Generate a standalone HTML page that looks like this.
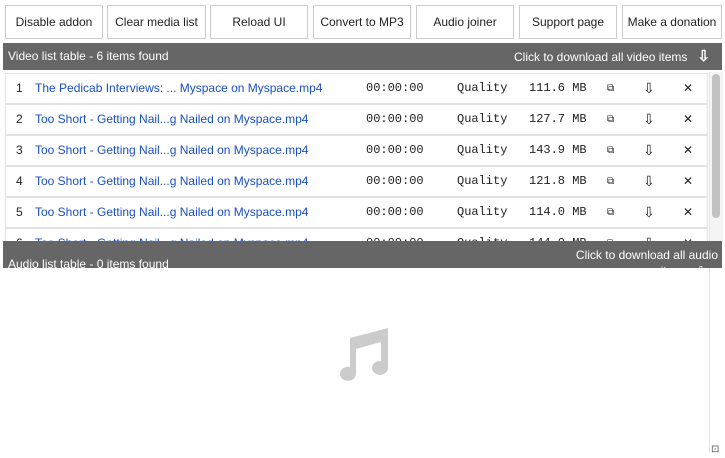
<!DOCTYPE html><html><head><style>
body{margin:0;width:725px;height:458px;background:#fff;font-family:"Liberation Sans",sans-serif;position:relative;overflow:hidden}
.b{position:absolute;top:5px;height:32px;border:1px solid #ccc;background:#fff;font-size:12px;line-height:32px;text-align:center;color:#222}
.bar{position:absolute;left:3px;width:719px;background:#666;color:#fff;font-size:12px}
.row{position:absolute;left:5px;width:701px;height:29px;border:1px solid #e2e2e2;font-size:12px;line-height:29px;color:#222}
.row span{position:absolute}
.n{left:10px}.t{left:29px;color:#1a4fc4;font-size:12px}.d{left:360px;font-family:"Liberation Mono",monospace}
.q{left:451px;font-family:"Liberation Mono",monospace}.s{left:523px;font-family:"Liberation Mono",monospace}
.i1{left:601px;font-size:10px}.i2{left:637px;font-size:14px}.i3{left:677px;font-size:12px}
</style></head><body>
<div class="b" style="left:5px;width:96px">Disable addon</div>
<div class="b" style="left:107px;width:97px">Clear media list</div>
<div class="b" style="left:210px;width:96px">Reload UI</div>
<div class="b" style="left:313px;width:96px">Convert to MP3</div>
<div class="b" style="left:416px;width:96px">Audio joiner</div>
<div class="b" style="left:519px;width:96px">Support page</div>
<div class="b" style="left:622px;width:98px">Make a donation</div>
<div class="bar" style="top:43px;height:27px;line-height:27px"><span style="margin-left:5px">Video list table - 6 items found</span><span style="position:absolute;right:12px">Click to download all video items &nbsp;&nbsp;<b style="font-size:15px">⇩</b></span></div>
<div style="position:absolute;left:709px;top:72px;width:13px;height:169px;background:#f4f4f4;border-left:1px solid #e5e5e5"></div>
<div style="position:absolute;left:712px;top:74px;width:8px;height:144px;background:#c2c2c2;border-radius:4px"></div>
<div class="row" style="top:73px"><span class="n">1</span><span class="t">The Pedicab Interviews: ... Myspace on Myspace.mp4</span><span class="d">00:00:00</span><span class="q">Quality</span><span class="s">111.6 MB</span><span class="i1">⧉</span><span class="i2">⇩</span><span class="i3">✕</span></div>
<div class="row" style="top:104px"><span class="n">2</span><span class="t">Too Short - Getting Nail...g Nailed on Myspace.mp4</span><span class="d">00:00:00</span><span class="q">Quality</span><span class="s">127.7 MB</span><span class="i1">⧉</span><span class="i2">⇩</span><span class="i3">✕</span></div>
<div class="row" style="top:135px"><span class="n">3</span><span class="t">Too Short - Getting Nail...g Nailed on Myspace.mp4</span><span class="d">00:00:00</span><span class="q">Quality</span><span class="s">143.9 MB</span><span class="i1">⧉</span><span class="i2">⇩</span><span class="i3">✕</span></div>
<div class="row" style="top:166px"><span class="n">4</span><span class="t">Too Short - Getting Nail...g Nailed on Myspace.mp4</span><span class="d">00:00:00</span><span class="q">Quality</span><span class="s">121.8 MB</span><span class="i1">⧉</span><span class="i2">⇩</span><span class="i3">✕</span></div>
<div class="row" style="top:197px"><span class="n">5</span><span class="t">Too Short - Getting Nail...g Nailed on Myspace.mp4</span><span class="d">00:00:00</span><span class="q">Quality</span><span class="s">114.0 MB</span><span class="i1">⧉</span><span class="i2">⇩</span><span class="i3">✕</span></div>
<div class="row" style="top:228px"><span class="n">6</span><span class="t">Too Short - Getting Nail...g Nailed on Myspace.mp4</span><span class="d">00:00:00</span><span class="q">Quality</span><span class="s">144.0 MB</span><span class="i1">⧉</span><span class="i2">⇩</span><span class="i3">✕</span></div>
<div class="bar" style="top:241px;height:27px;overflow:hidden"><span style="position:absolute;left:5px;top:16px">Audio list table - 0 items found</span><span style="position:absolute;right:4px;top:7px">Click to download all audio</span><span style="position:absolute;right:16px;top:23px">items &nbsp;⇩</span></div>
<div style="position:absolute;left:709px;top:268px;width:13px;height:185px;border-left:1px solid #e5e5e5"></div>
<svg style="position:absolute;left:333px;top:328px" width="56" height="54" viewBox="0 0 56 54"><path d="M17 10 L55 0 V40 A8 7 0 1 1 48 33 V14 L23 21 V46 A8 7 0 1 1 17 39 Z" fill="#ccc"/></svg>
<div style="position:absolute;left:711px;top:444px;font-size:10px;color:#555">⊡</div>
</body></html>
